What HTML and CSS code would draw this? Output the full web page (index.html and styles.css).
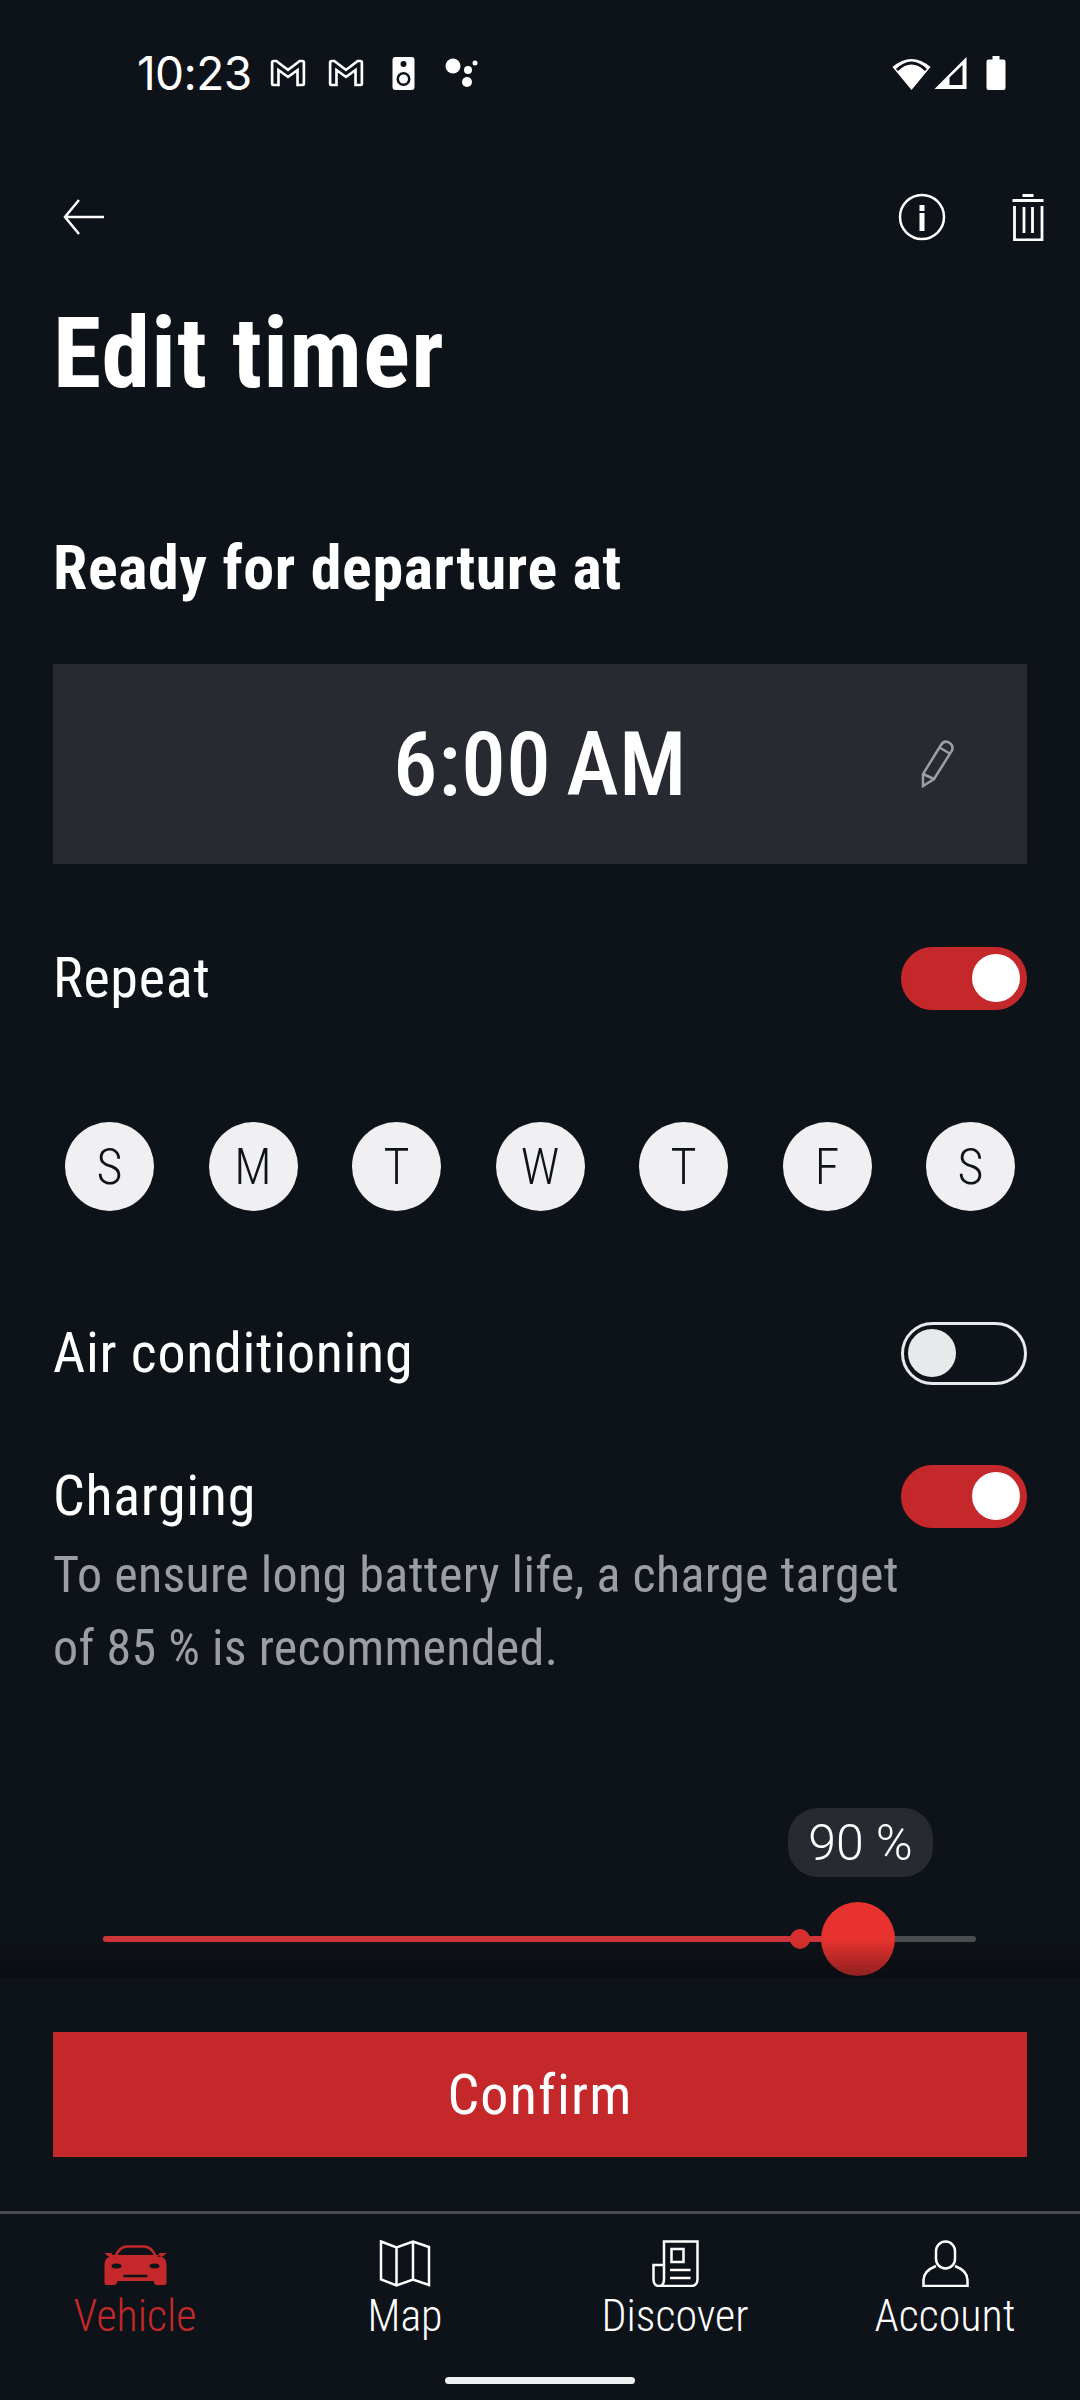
FILE: index.html
```html
<!DOCTYPE html>
<html>
<head>
    <meta charset="utf-8">
    <title>Edit timer</title>
    <link rel="stylesheet" href="styles.css">
</head>
<body>
<div id="app">

    <div id="status_bar">
        <span id="clock">10:23</span>
        <svg class="icon_gmail" width="36" height="28" viewBox="0 0 34 28" preserveAspectRatio="none"><path d="M2 3.500Q2 2 3.500 2H6L17 11 28 2H30.500Q32 2 32 3.500V25Q32 26 31 26H26V11L17 18 8 11V26H3Q2 26 2 25Z" fill="none" stroke="#fff" stroke-width="2.500"/></svg>
        <svg class="icon_gmail" width="36" height="28" viewBox="0 0 34 28" preserveAspectRatio="none"><path d="M2 3.500Q2 2 3.500 2H6L17 11 28 2H30.500Q32 2 32 3.500V25Q32 26 31 26H26V11L17 18 8 11V26H3Q2 26 2 25Z" fill="none" stroke="#fff" stroke-width="2.500"/></svg>
        <svg class="icon_speaker" width="23" height="33" viewBox="0 0 22 33"><rect width="22" height="33" rx="3" fill="#fff"/><circle cx="11" cy="7" r="3" fill="#0e1319"/><circle cx="11" cy="22" r="7" fill="#0e1319"/><circle cx="11" cy="22" r="4.500" fill="#fff"/></svg>
        <svg class="icon_dots" width="33" height="30" viewBox="0 0 33 30"><circle cx="8" cy="8" r="7.500" fill="#fff"/><circle cx="23" cy="12" r="4" fill="#fff"/><circle cx="30" cy="5" r="2.500" fill="#fff"/><circle cx="22" cy="24" r="5" fill="#fff"/></svg>
        <span class="spacer"></span>
        <svg width="39" height="33" viewBox="0 0 38 33"><path d="M0 10Q19 -6 38 10L19 33Z" fill="#fff"/><path d="M4.500 13Q19 -1 33.500 13" fill="none" stroke="#0e1319" stroke-width="3"/></svg>
        <svg class="icon_signal" width="33" height="32" viewBox="0 0 32 32"><path d="M0 32L32 0V32Z" fill="#fff"/><path d="M15 28V20.500L28 8V28Z" fill="#0e1319"/></svg>
        <svg class="icon_battery" width="20" height="34" viewBox="0 0 19 34"><path d="M6 0H13V3.500H17Q19 3.500 19 5.500V32Q19 34 17 34H2Q0 34 0 32V5.500Q0 3.500 2 3.500H6Z" fill="#fff"/></svg>
    </div>

    <div id="top_bar">
        <svg width="42" height="36" viewBox="0 0 42 36"><path d="M41 18H3M16 1L2 18 16 35" fill="none" stroke="#fff" stroke-width="2.500"/></svg>
        <span class="spacer"></span>
        <svg width="48" height="48" viewBox="0 0 48 48"><circle cx="24" cy="24" r="22" fill="none" stroke="#fff" stroke-width="2.500"/><rect x="21.500" y="12" width="5" height="6" fill="#fff"/><rect x="21.500" y="20" width="5" height="18" fill="#fff"/></svg>
        <svg class="icon_trash" width="32" height="48" viewBox="0 0 31 48"><path d="M10 2.500H21M0 7.500H31M2 13V47H29.500V13M11.500 14V40M20 14V40" fill="none" stroke="#fff" stroke-width="2.800"/></svg>
    </div>

    <div id="contents_main">
        <h1>Edit timer</h1>
        <h2>Ready for departure at</h2>

        <div id="time_box">
            <span id="time_value">6:00 AM</span>
            <svg id="time_pencil" width="34" height="48" viewBox="0 0 34 48"><path d="M2 46V34L20 5Q23 0 28 2.500 33 5.500 31 10.500L13 39ZM2 34L13 39M18.500 7.500L29.500 14" fill="none" stroke="#9b9ea3" stroke-width="2.500"/></svg>
        </div>

        <div class="row row_repeat">
            <span class="row_label">Repeat</span>
            <span class="toggle toggle_on"><span class="knob"></span></span>
        </div>

        <div id="days">
            <span class="day">S</span>
            <span class="day">M</span>
            <span class="day">T</span>
            <span class="day">W</span>
            <span class="day">T</span>
            <span class="day">F</span>
            <span class="day">S</span>
        </div>

        <div class="row row_air">
            <span class="row_label">Air conditioning</span>
            <span class="toggle"><span class="knob"></span></span>
        </div>

        <div class="row row_charging">
            <span class="row_label">Charging</span>
            <span class="toggle toggle_on"><span class="knob"></span></span>
        </div>
        <p id="charge_note">To ensure long battery life, a charge target<br>of 85 % is recommended.</p>

        <div id="slider">
            <span id="slider_pill">90 %</span>
            <div id="slider_track">
                <span id="slider_fill"></span>
                <span id="slider_mark"></span>
                <span id="slider_knob"></span>
            </div>
        </div>
        <div id="scroll_fade"></div>
    </div>

    <div id="footer">
        <div id="confirm">Confirm</div>
        <div id="nav">
            <div class="tab tab_active">
                <svg width="63" height="47" viewBox="0 0 62 47"><g transform="translate(0 5)"><path d="M11 11Q15 2 22 1.500H40Q47 2 51 11" fill="none" stroke="#c4282b" stroke-width="2.500"/><path d="M0 8H7L9 12 3 11ZM62 8H55L53 12 59 11ZM0 19Q0 13 8 10H54Q62 13 62 19V38Q62 40 60 40H52Q50 40 49 36H13Q12 40 10 40H2Q0 40 0 38Z" fill="#c4282b"/><ellipse cx="12" cy="21" rx="5" ry="2.500" fill="#0e1319"/><ellipse cx="50" cy="21" rx="5" ry="2.500" fill="#0e1319"/><path d="M19 31H43" stroke="#0e1319" stroke-width="2.500"/></g></svg>
                <span>Vehicle</span>
            </div>
            <div class="tab">
                <svg width="52" height="47" viewBox="0 0 51 47"><path d="M1.500 1.500L17 7.500 33.500 1.500 49.500 7V45L33.500 39.500 17 45.500 1.500 39.500ZM17 7.500V45.500M33.500 1.500V39.500" fill="none" stroke="#fff" stroke-width="2.500"/></svg>
                <span>Map</span>
            </div>
            <div class="tab">
                <svg width="47" height="47" viewBox="0 0 47 47"><path d="M12 25V1.500H45.500V39Q45.500 46 39 46H7M12 25H1.500V39Q1.500 46 7 46 12 46 12 39V25ZM19.500 9H31.500V22H19.500ZM18 30H38.500M18 38H38.500" fill="none" stroke="#fff" stroke-width="2.500"/></svg>
                <span>Discover</span>
            </div>
            <div class="tab">
                <svg width="47" height="47" viewBox="0 0 47 47"><rect x="14" y="1.500" width="19" height="27" rx="9.500" fill="none" stroke="#fff" stroke-width="2.500"/><path d="M14 26Q1.500 31 1.500 40V46H45.500V40Q45.500 31 33 26" fill="none" stroke="#fff" stroke-width="2.500"/></svg>
                <span>Account</span>
            </div>
        </div>
        <div id="home_bar"></div>
    </div>

</div>
</body>
</html>
```

FILE: styles.css
```css
html, body {
    margin: 0;
    padding: 0;
    background: #0e1319;
}

#app {
    width: 1080px;
    height: 2400px;
    display: flex;
    flex-direction: column;
    overflow: hidden;
    color: #ffffff;
    font-family: Roboto, "Liberation Sans", sans-serif;
    font-stretch: 85%;
}

.spacer {
    flex: 1;
}

#status_bar {
    height: 146px;
    flex: none;
    display: flex;
    align-items: center;
    padding: 0 74px 0 137px;
    box-sizing: border-box;
}

#clock {
    font-size: 46px;
    font-family: Inter, Roboto, sans-serif;
    font-stretch: 100%;
    letter-spacing: -0.6px;
    margin-right: 19px;
}

.icon_gmail {
    margin-right: 22px;
}

.icon_speaker {
    margin-left: 6px;
    margin-right: 30px;
}

.icon_signal {
    margin-left: 3px;
}

.icon_battery {
    margin-left: 19px;
}

#top_bar {
    height: 142px;
    flex: none;
    display: flex;
    align-items: center;
    padding: 0 36px 0 63px;
    box-sizing: border-box;
}

.icon_trash {
    margin-left: 66px;
}

#contents_main {
    flex: 1;
    position: relative;
    padding: 0 53px;
}

h1 {
    margin: 0;
    padding-top: 2px;
    font-size: 98px;
    line-height: 128px;
    font-weight: 700;
    letter-spacing: 1.2px;
}

h2 {
    margin: 115px 0 0;
    font-size: 62px;
    line-height: 70px;
    font-weight: 700;
    letter-spacing: 0.6px;
}

#time_box {
    height: 200px;
    margin-top: 61px;
    background: #272a31;
    display: flex;
    align-items: center;
    justify-content: center;
    position: relative;
}

#time_value {
    font-size: 89px;
    font-weight: 500;
    letter-spacing: 0.5px;
    word-spacing: -6px;
}

#time_pencil {
    position: absolute;
    right: 72px;
    top: 76px;
}

.row {
    display: flex;
    align-items: center;
    justify-content: space-between;
    height: 64px;
}

.row_label {
    font-size: 56px;
    font-weight: 400;
    letter-spacing: 0.7px;
}

.row_repeat {
    margin-top: 82px;
}

.row_air {
    margin-top: 110px;
}

.row_charging {
    margin-top: 79px;
}

.toggle {
    width: 126px;
    height: 63px;
    box-sizing: border-box;
    border: 3px solid #e8e9eb;
    border-radius: 32px;
    padding: 4px;
    display: flex;
}

.toggle_on {
    background: #c4282b;
    border-color: #c4282b;
    justify-content: flex-end;
}

.knob {
    width: 48px;
    height: 48px;
    border-radius: 50%;
    background: #e8e9eb;
}

.toggle_on .knob {
    background: #ffffff;
}

#days {
    display: flex;
    justify-content: space-between;
    padding: 0 12px;
    margin-top: 112px;
}

.day {
    width: 89px;
    height: 89px;
    border-radius: 50%;
    background: #f0f0f2;
    color: #0e1319;
    font-size: 50px;
    font-weight: 300;
    display: flex;
    align-items: center;
    justify-content: center;
}

#charge_note {
    margin: 11px 0 0;
    font-size: 50px;
    line-height: 73px;
    font-weight: 400;
    letter-spacing: 0.33px;
    color: #9b9ea3;
}

#slider {
    position: absolute;
    left: 103px;
    width: 873px;
    top: 1520px;
    height: 170px;
}

#slider_pill {
    position: absolute;
    left: 685px;
    top: 0;
    width: 145px;
    height: 69px;
    border-radius: 30px;
    background: #272a31;
    font-size: 50px;
    font-weight: 300;
    font-stretch: 100%;
    display: flex;
    align-items: center;
    justify-content: center;
}

#slider_track {
    position: absolute;
    left: 0;
    right: 0;
    top: 128px;
    height: 6px;
    border-radius: 3px;
    background: #4a4c50;
}

#slider_fill {
    position: absolute;
    left: 0;
    top: 0;
    bottom: 0;
    width: 755px;
    border-radius: 3px;
    background: #cc3539;
}

#slider_mark {
    position: absolute;
    left: 687px;
    top: -7px;
    width: 20px;
    height: 20px;
    border-radius: 50%;
    background: #d8302f;
}

#slider_knob {
    position: absolute;
    left: 718px;
    top: -34px;
    width: 74px;
    height: 74px;
    border-radius: 50%;
    background: #e8322f;
}

#scroll_fade {
    position: absolute;
    left: 0;
    right: 0;
    bottom: 0;
    height: 38px;
    background: linear-gradient(to bottom, rgba(4, 6, 9, 0), rgba(4, 6, 9, 0.42));
}

#footer {
    height: 422px;
    flex: none;
    display: flex;
    flex-direction: column;
}

#confirm {
    height: 125px;
    margin: 54px 53px 54px;
    background: #c4282b;
    font-size: 56px;
    font-weight: 400;
    letter-spacing: 1.2px;
    display: flex;
    align-items: center;
    justify-content: center;
}

#nav {
    display: flex;
    border-top: 3px solid #4a4c50;
    padding-top: 26px;
}

.tab {
    flex: 1;
    display: flex;
    flex-direction: column;
    align-items: center;
    font-size: 44px;
    line-height: 56px;
    font-weight: 350;
}

.tab svg {
    margin-bottom: 1px;
}

.tab_active {
    color: #c4282b;
}

#home_bar {
    width: 190px;
    height: 7px;
    border-radius: 4px;
    background: #eff0f2;
    margin: auto auto 16px;
}
```
